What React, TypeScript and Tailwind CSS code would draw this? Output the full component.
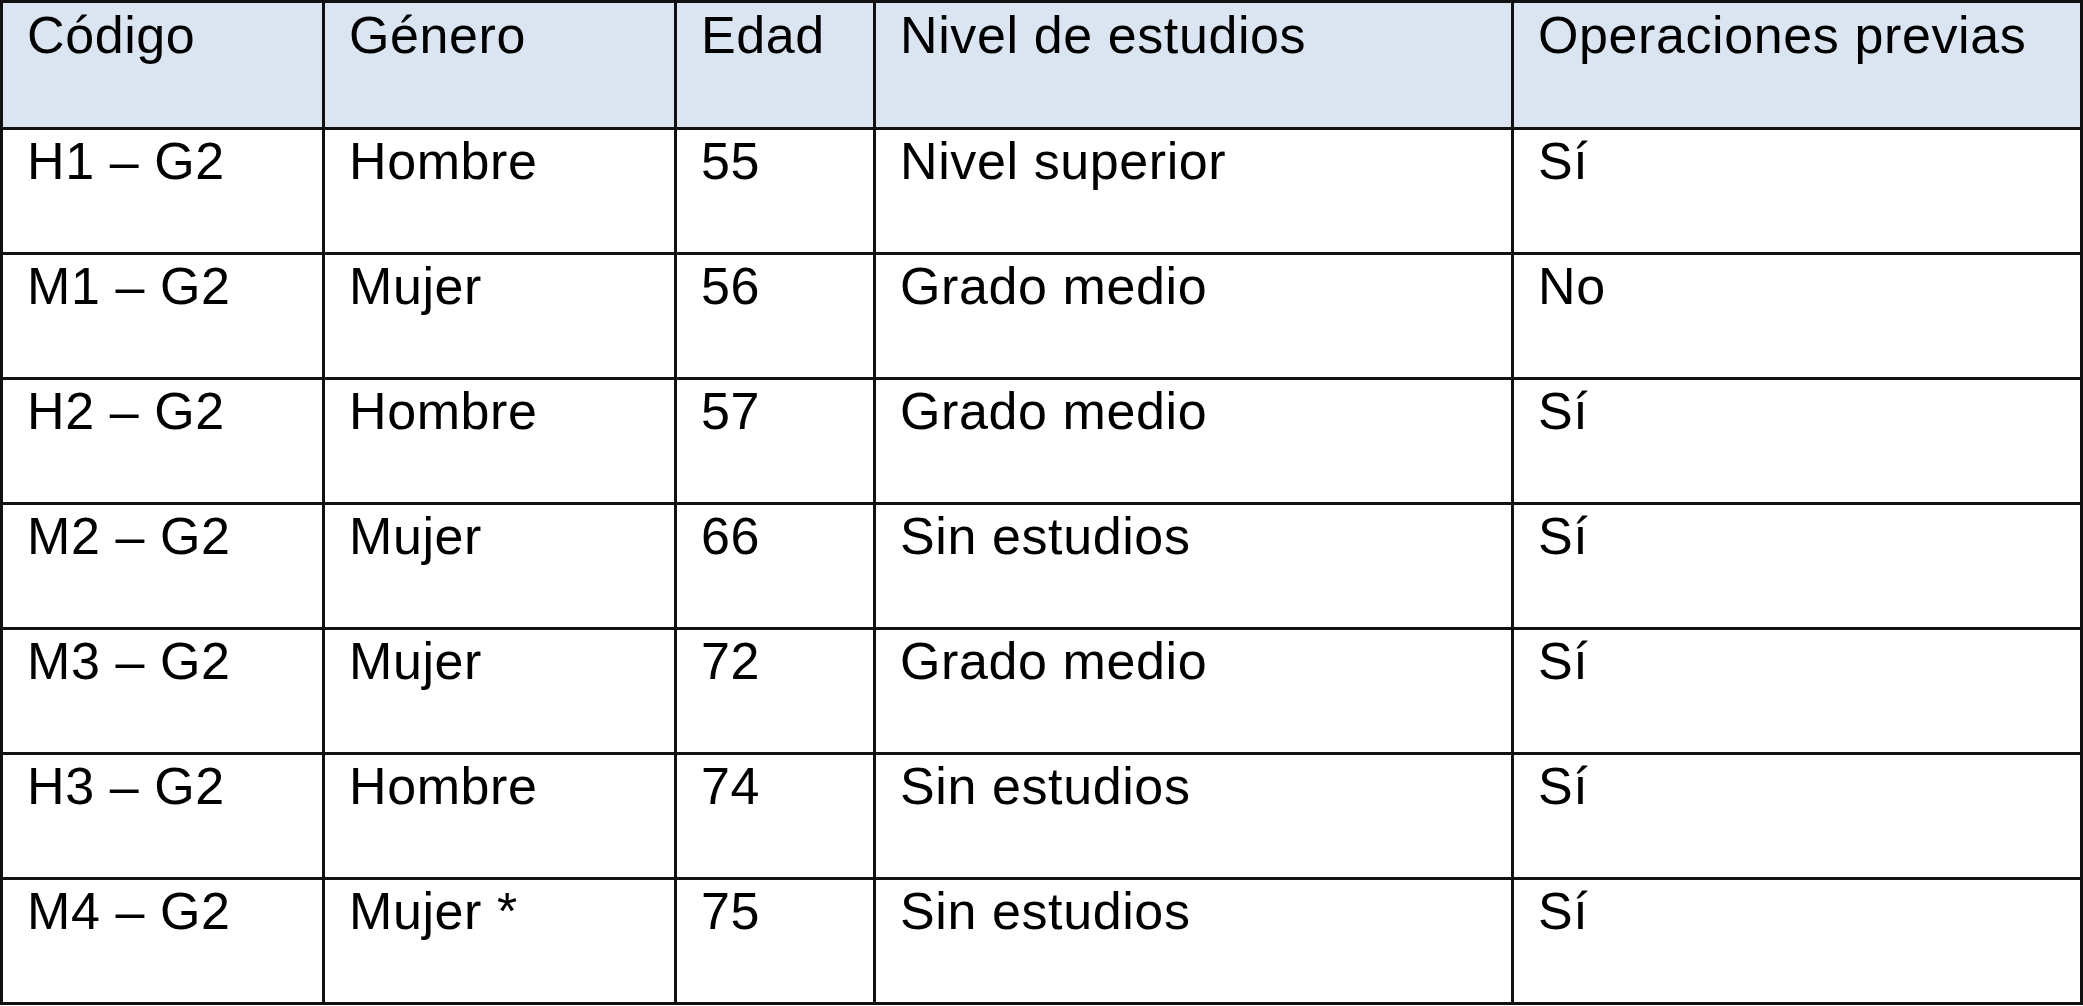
import React from "react";

const header = ["Código", "Género", "Edad", "Nivel de estudios", "Operaciones previas"];
const rows: string[][] = [
  ["H1 – G2", "Hombre", "55", "Nivel superior", "Sí"],
  ["M1 – G2", "Mujer", "56", "Grado medio", "No"],
  ["H2 – G2", "Hombre", "57", "Grado medio", "Sí"],
  ["M2 – G2", "Mujer", "66", "Sin estudios", "Sí"],
  ["M3 – G2", "Mujer", "72", "Grado medio", "Sí"],
  ["H3 – G2", "Hombre", "74", "Sin estudios", "Sí"],
  ["M4 – G2", "Mujer *", "75", "Sin estudios", "Sí"],
];

export default function App() {
  return (
    <div
      className="w-[2083px] h-[1006px] bg-white overflow-hidden"
      style={{ fontFamily: '"Liberation Sans", Arial, sans-serif' }}
    >
      <div className="grid grid-cols-[319px_349px_196px_635px_566px] grid-rows-[124px_repeat(7,122px)] gap-[3px] p-[3px] bg-[#111111] w-[2083px] text-[52px] leading-[1.15] tracking-[0.6px] text-black">
        {header.map((h) => (
          <div key={h} className="bg-[#dbe5f1] pl-[24px] pt-[3px] whitespace-nowrap">
            {h}
          </div>
        ))}
        {rows.map((r, i) =>
          r.map((c, j) => (
            <div key={`${i}-${j}`} className="bg-white pl-[24px] pt-[2px] whitespace-nowrap">
              {c}
            </div>
          ))
        )}
      </div>
    </div>
  );
}
